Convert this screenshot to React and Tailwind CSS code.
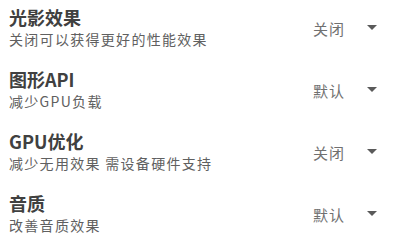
import React from 'react';

const settings = [
  { title: '光影效果', desc: '关闭可以获得更好的性能效果', value: '关闭' },
  { title: '图形API', desc: '减少GPU负载', value: '默认' },
  { title: 'GPU优化', desc: '减少无用效果 需设备硬件支持', value: '关闭' },
  { title: '音质', desc: '改善音质效果', value: '默认' },
];

function Caret() {
  return (
    <svg width="10" height="5" viewBox="0 0 10 5" className="block">
      <path d="M0 0 L10 0 L5 5 Z" fill="#5a5a5a" />
    </svg>
  );
}

function SettingRow({ title, desc, value }) {
  return (
    <div className="flex h-[62px] items-start justify-between pt-[6px] pl-[9px] pr-[18px]">
      <div className="flex flex-col">
        <span className="text-[18px] leading-[22px] font-bold text-[#404040]">{title}</span>
        <span className="mt-[2px] text-[14px] leading-[18px] tracking-[1.3px] text-[#606060]">{desc}</span>
      </div>
      <div className="mt-[14px] flex items-center">
        <span className="text-[15px] leading-[18px] tracking-[1px] text-[#707070]">{value}</span>
        <span className="ml-[22px] mt-[-4px]">
          <Caret />
        </span>
      </div>
    </div>
  );
}

export default function App() {
  return (
    <div
      className="w-[395px] h-[241px] overflow-hidden bg-white"
      style={{ fontFamily: '"Noto Sans CJK SC", "Noto Sans", sans-serif' }}
    >
      {settings.map((s) => (
        <SettingRow key={s.title} {...s} />
      ))}
    </div>
  );
}
